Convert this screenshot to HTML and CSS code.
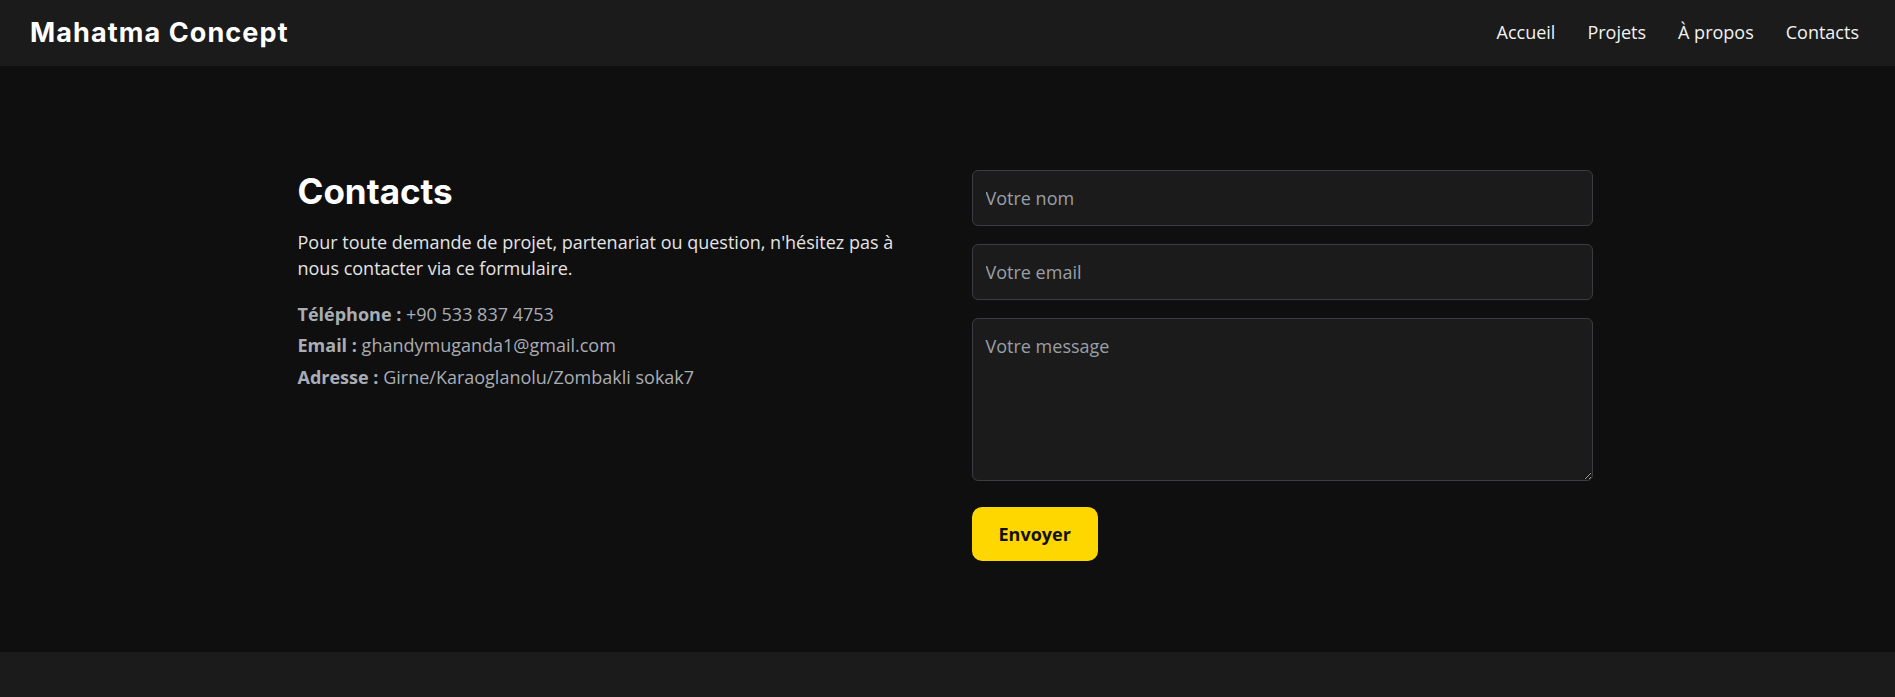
FILE: index.html
```html
<!DOCTYPE html>
<html lang="fr">
<head>
<meta charset="utf-8">
<title>Contacts - Mahatma Concept</title>
<link rel="stylesheet" href="styles.css">
</head>
<body>
<header class="site-header">
  <div class="logo">Mahatma Concept</div>
  <nav class="nav">
    <a href="#">Accueil</a>
    <a href="#">Projets</a>
    <a href="#">À propos</a>
    <a href="#">Contacts</a>
  </nav>
</header>
<main class="contact-section">
  <div class="container">
    <div class="contact-info">
      <h2 class="title">Contacts</h2>
      <p class="intro">Pour toute demande de projet, partenariat ou question, n'hésitez pas à nous contacter via ce formulaire.</p>
      <p class="info"><strong>Téléphone :</strong> +90 533 837 4753</p>
      <p class="info"><strong>Email :</strong> ghandymuganda1@gmail.com</p>
      <p class="info"><strong>Adresse :</strong> Girne/Karaoglanolu/Zombakli sokak7</p>
    </div>
    <form class="contact-form">
      <input class="field" type="text" placeholder="Votre nom">
      <input class="field" type="email" placeholder="Votre email">
      <textarea class="field message" placeholder="Votre message"></textarea>
      <button class="send" type="button">Envoyer</button>
    </form>
  </div>
</main>
<footer class="site-footer"></footer>
</body>
</html>
```
FILE: styles.css
```css
* { box-sizing: border-box; }
html, body { margin: 0; padding: 0; }
body {
  background: #0f0f0f;
  color: #e6e6e6;
  font-family: "Open Sans", "Noto Sans", sans-serif;
}
.site-header {
  height: 66px;
  background: #1b1b1b;
  display: flex;
  align-items: center;
  justify-content: space-between;
  padding: 0 36px 2px 30px;
}
.logo {
  font-family: Inter, "DejaVu Sans", sans-serif;
  font-weight: 700;
  font-size: 27px;
  color: #ffffff;
  letter-spacing: 1.1px;
}
.nav {
  display: flex;
  gap: 32px;
}
.nav a {
  color: #f2f2f2;
  text-decoration: none;
  font-size: 18px;
}
.contact-section {
  padding: 104px 0 91px;
}
.container {
  max-width: 1300px;
  margin: 0 auto;
  display: grid;
  grid-template-columns: 1fr 1fr;
  gap: 48px;
  align-items: start;
}
.title {
  margin: 4px 0 0;
  font-family: Inter, "DejaVu Sans", sans-serif;
  font-weight: 700;
  font-size: 35px;
  line-height: 1;
  color: #ffffff;
}
.intro {
  margin: 20px 0 19px;
  font-size: 18px;
  line-height: 26.4px;
  color: #e4e4e4;
}
.info {
  margin: 0 0 5.5px;
  font-size: 18px;
  line-height: 26px;
  color: #a9adb4;
}
.info strong { color: #a9adb4; font-weight: 700; }
.contact-form {
  max-width: 621px;
  display: flex;
  flex-direction: column;
  align-items: flex-start;
}
.field {
  width: 100%;
  background: #1b1b1b;
  border: 1px solid #3b3c42;
  border-radius: 6px;
  padding: 15px 13px;
  font-family: "Open Sans", "Noto Sans", sans-serif;
  font-size: 18px;
  line-height: 24px;
  color: #e6e6e6;
  margin-bottom: 18px;
  outline: none;
}
.field::placeholder { color: #9a9fa7; }
.message {
  height: 163px;
  resize: vertical;
  margin-bottom: 26px;
  display: block;
}
.send {
  background: #ffd700;
  color: #111111;
  border: none;
  border-radius: 10px;
  padding: 15px 27px;
  font-family: "Open Sans", "Noto Sans", sans-serif;
  font-weight: 700;
  font-size: 18px;
  line-height: 24px;
  height: 54px;
  cursor: pointer;
}
.site-footer {
  background: #1b1b1b;
  height: 120px;
}
```
